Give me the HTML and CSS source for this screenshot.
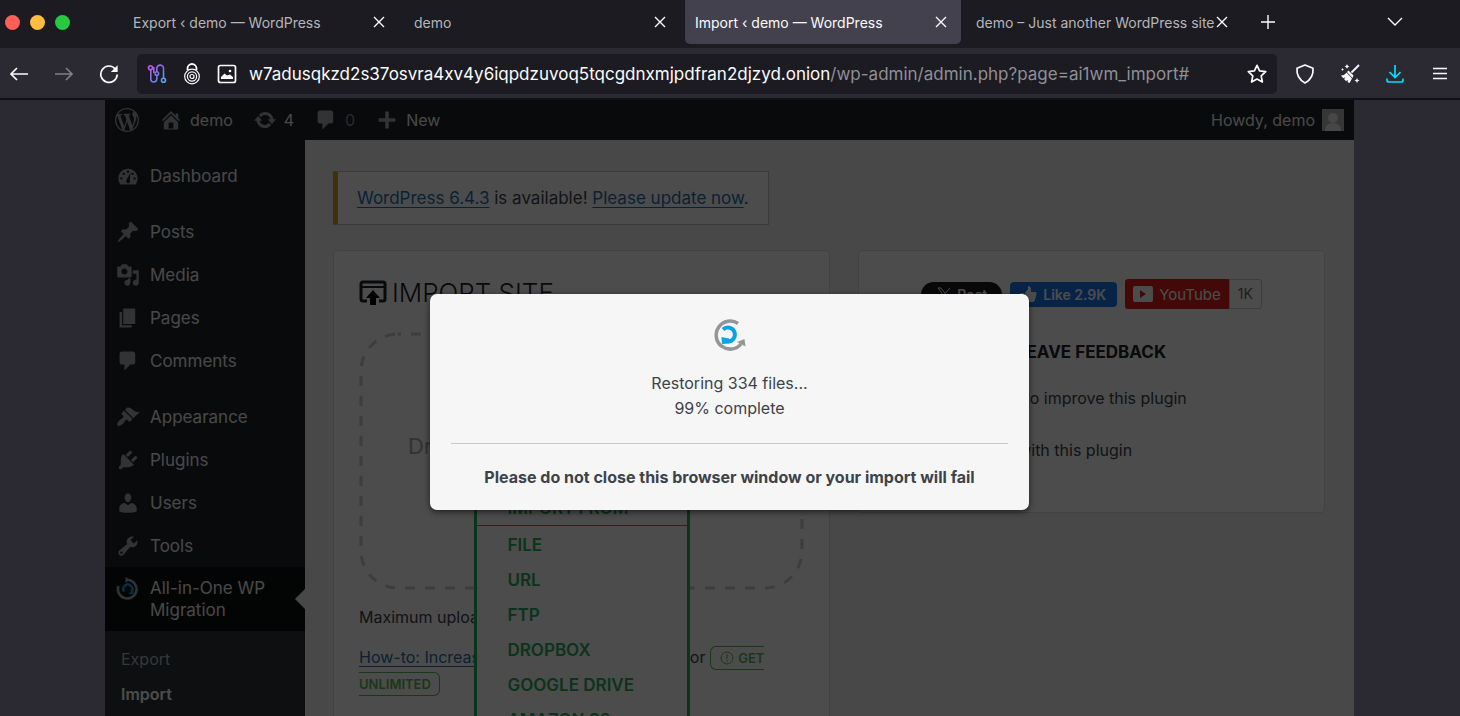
FILE: index.html
```html
<!DOCTYPE html>
<html lang="en">
<head>
    <meta charset="UTF-8">
    <meta name="viewport" content="width=device-width, initial-scale=1.0">
    <title>Import ‹ demo — WordPress</title>
    <link rel="stylesheet" href="styles.css">
</head>
<body>
    <header class="browser">
        <div class="tabs">
            <div class="lights">
                <span class="light red"></span>
                <span class="light yellow"></span>
                <span class="light green"></span>
            </div>
            <div class="tab">
                <span class="tab-title">Export ‹ demo — WordPress</span>
                <button class="close" aria-label="Close tab"><svg width="12" height="12" viewBox="0 0 12 12"><path d="M1 1l10 10M11 1L1 11"/></svg></button>
            </div>
            <div class="tab">
                <span class="tab-title">demo</span>
                <button class="close" aria-label="Close tab"><svg width="12" height="12" viewBox="0 0 12 12"><path d="M1 1l10 10M11 1L1 11"/></svg></button>
            </div>
            <div class="tab active">
                <span class="tab-title">Import ‹ demo — WordPress</span>
                <button class="close" aria-label="Close tab"><svg width="12" height="12" viewBox="0 0 12 12"><path d="M1 1l10 10M11 1L1 11"/></svg></button>
            </div>
            <div class="tab">
                <span class="tab-title">demo – Just another WordPress site</span>
                <button class="close" aria-label="Close tab"><svg width="12" height="12" viewBox="0 0 12 12"><path d="M1 1l10 10M11 1L1 11"/></svg></button>
            </div>
            <button class="new-tab" aria-label="New tab"><svg width="16" height="16" viewBox="0 0 16 16"><path d="M8 1v14M1 8h14"/></svg></button>
            <button class="all-tabs" aria-label="List all tabs"><svg width="16" height="16" viewBox="0 0 16 16"><path d="M1 4l7 7 7-7"/></svg></button>
        </div>

        <div class="toolbar">
            <div class="nav">
                <button aria-label="Back"><svg width="20" height="20" viewBox="0 0 20 20"><path d="M19 10H2M8 4l-6 6 6 6"/></svg></button>
                <button class="off" aria-label="Forward"><svg width="20" height="20" viewBox="0 0 20 20"><path d="M1 10h17M12 4l6 6-6 6"/></svg></button>
                <button aria-label="Reload"><svg width="20" height="20" viewBox="0 0 20 20"><path d="M16.500 5.200A8.200 8.200 0 1 0 18.200 10.500"/><path d="M18.600 1.200v6.800h-6.800z" fill="#fbfbfe" stroke="none"/></svg></button>
            </div>
            <div class="address">
                <svg width="20" height="20" viewBox="0 0 20 20">
                    <defs>
                        <linearGradient id="circuit" x1="0" y1="0" x2="20" y2="20" gradientUnits="userSpaceOnUse">
                            <stop offset="0" stop-color="#d355e0"/>
                            <stop offset=".5" stop-color="#7a70ea"/>
                            <stop offset="1" stop-color="#3cc4f5"/>
                        </linearGradient>
                    </defs>
                    <g stroke="url(#circuit)" fill="none" stroke-width="1.600">
                        <circle cx="3.500" cy="3.800" r="2"/>
                        <circle cx="16.500" cy="16.300" r="2"/>
                        <circle cx="9.800" cy="9.500" r="1.800"/>
                        <path d="M3.800 5.800v9.200a3 3 0 0 0 6 0v-3.700M9.800 7.700V4.500a3.300 3.300 0 0 1 6.700 0v9.800M5.500 3.800h1.300v5.200"/>
                    </g>
                </svg>
                <svg width="18" height="22" viewBox="0 0 18 22">
                    <path d="M4.500 7V5.500a4.500 4.500 0 0 1 9 0V7" stroke-width="1.800"/>
                    <circle cx="9" cy="13.500" r="7.300" stroke-width="1.200"/>
                    <circle cx="9" cy="13.500" r="4.600" stroke-width="1.200"/>
                    <circle cx="9" cy="13.500" r="2" stroke-width="1.200"/>
                </svg>
                <svg width="20" height="20" viewBox="0 0 20 20">
                    <rect x="1.500" y="1.500" width="17" height="17" rx="2"/>
                    <path d="M4 15v-2l3.500-3.500 2.500 2 3-1 3 2.500v2z" fill="#fbfbfe" stroke="none"/>
                    <circle cx="13" cy="7" r="1.300" fill="#fbfbfe" stroke="none"/>
                </svg>
                <div class="url"><strong>w7adusqkzd2s37osvra4xv4y6iqpdzuvoq5tqcgdnxmjpdfran2djzyd.onion</strong>/wp-admin/admin.php?page=ai1wm_import#</div>
                <button aria-label="Bookmark this page"><svg width="20" height="20" viewBox="0 0 20 20"><path d="M10 1.300l2.600 5.600 6.100.8-4.500 4.200 1.200 6.100-5.400-3-5.400 3 1.200-6.100L1.300 7.700l6.100-.8z" stroke-linejoin="round"/></svg></button>
            </div>
            <div class="tools">
                <button aria-label="Security level"><svg width="20" height="20" viewBox="0 0 20 20"><path d="M10 1l8 3.300c.5 6.200-2 11.500-8 14.700C4 15.800 1.500 10.500 2 4.300z" stroke-linejoin="round"/></svg></button>
                <button aria-label="New identity"><svg width="20" height="20" viewBox="0 0 20 20">
                    <path d="M19 1l-7.500 7.500" stroke-width="1.800"/>
                    <path d="M8.500 6.500l5 5-1 2.500-5.500-6zM6.500 8.500l5.500 6-2.500 4.500-2-1 .5-2-2 1-1.800-1.700 1-2-2 1L1 11.500c2.500-.2 4.200-1 5.500-3z" fill="#fbfbfe" stroke="none"/>
                    <path d="M7 0l.8 1.700L9.500 2.500l-1.700.8L7 5l-.8-1.700-1.700-.8 1.700-.8zM2.500 4l.5 1 1 .5-1 .5-.5 1L2 6l-1-.5L2 5zM17 14l.8 1.700 1.700.8-1.700.8L17 19l-.8-1.700-1.700-.8 1.700-.8z" fill="#fbfbfe" stroke="none"/>
                </svg></button>
                <button class="download" aria-label="Downloads"><svg width="20" height="20" viewBox="0 0 20 20"><path d="M10 1v12M4.500 8l5.500 5.500L15.500 8M2 14.500v1.500q0 2 2 2h12q2 0 2-2v-1.500"/></svg></button>
                <button aria-label="Open menu"><svg width="20" height="20" viewBox="0 0 20 20"><path d="M3 4.500h14M3 9.500h14M3 14.500h14"/></svg></button>
            </div>
        </div>
    </header>

    <div class="viewport">
        <nav class="adminbar">
            <a href="#" class="bar-item" aria-label="About WordPress"><svg width="24" height="24" viewBox="0 0 20 20"><path d="M20 10c0-5.510-4.490-10-10-10C4.480 0 0 4.490 0 10c0 5.520 4.480 10 10 10 5.510 0 10-4.480 10-10zM7.780 15.370L4.370 6.220c.55-.02 1.170-.08 1.170-.08.5-.06.44-1.130-.06-1.110 0 0-1.450.11-2.370.11-.18 0-.37 0-.58-.01C4.120 2.690 6.870 1.110 10 1.110c2.330 0 4.450.87 6.050 2.340-.68-.11-1.650.39-1.650 1.580 0 .74.45 1.360.9 2.100.35.61.55 1.360.55 2.460 0 1.490-1.400 5-1.400 5l-3.030-8.370c.54-.02.82-.17.82-.17.5-.05.44-1.250-.06-1.220 0 0-1.440.12-2.380.12-.87 0-2.330-.12-2.330-.12-.5-.03-.56 1.200-.06 1.220l.92.08 1.260 3.410zM17.410 10c.24-.64.74-1.870.43-4.250.7 1.290 1.050 2.710 1.050 4.250 0 3.290-1.730 6.240-4.400 7.780.97-2.590 1.940-5.200 2.920-7.780zM6.100 18.090C3.120 16.650 1.110 13.530 1.110 10c0-1.300.23-2.480.72-3.590C3.250 10.300 4.670 14.200 6.100 18.090zm4.030-6.630l2.580 6.980c-.86.29-1.760.45-2.710.45-.79 0-1.570-.11-2.290-.33.81-2.380 1.620-4.740 2.420-7.100z"/></svg></a>
            <a href="#" class="bar-item"><svg width="24" height="24" viewBox="0 0 20 20"><path d="M16 8.500l1.530 1.530-1.060 1.060L10 4.600l-6.470 6.490-1.060-1.060L10 2.500l4 4v-2h2v4zm-6-2.460l6 5.990V18H4v-5.970zM12 17v-5H8v5h4z"/></svg>demo</a>
            <a href="#" class="bar-item"><svg width="24" height="24" viewBox="0 0 20 20"><path d="M10.200 3.280c3.530 0 6.430 2.610 6.920 6h2.080l-3.500 4-3.500-4h2.320c-.45-1.970-2.210-3.450-4.320-3.450-1.450 0-2.730.71-3.540 1.780L4.950 5.660C6.230 4.200 8.110 3.280 10.200 3.280zm-.4 13.440c-3.520 0-6.430-2.610-6.920-6H.8l3.500-4 3.500 4H5.480c.45 1.970 2.210 3.450 4.320 3.450 1.450 0 2.730-.71 3.540-1.780l1.710 1.950c-1.280 1.460-3.150 2.380-5.250 2.380z"/></svg>4</a>
            <a href="#" class="bar-item none"><svg width="24" height="24" viewBox="0 0 20 20"><path d="M5 2h9c1.100 0 2 .9 2 2v7c0 1.100-.9 2-2 2h-2l-5 5v-5H5c-1.100 0-2-.9-2-2V4c0-1.100.9-2 2-2z"/></svg>0</a>
            <a href="#" class="bar-item"><svg width="24" height="24" viewBox="0 0 20 20"><path d="M17 8.500v3h-5.500V17h-3v-5.500H3v-3h5.500V3h3v5.500z"/></svg>New</a>
            <a href="#" class="bar-item account">Howdy, demo
                <svg class="avatar" width="22" height="22" viewBox="0 0 22 22"><rect width="22" height="22" fill="#b4b4b4"/><circle cx="11" cy="9" r="5" fill="#eee"/><path d="M3 22c0-5 3-8 8-8s8 3 8 8z" fill="#eee"/></svg></a>
        </nav>

        <div class="admin">
            <nav class="menu">
                <a href="#"><svg width="24" height="24" viewBox="0 0 20 20"><path fill-rule="evenodd" d="M3.760 17h12.480c1.100-1.370 1.760-3.110 1.760-5 0-4.420-3.580-8-8-8s-8 3.580-8 8c0 1.890.66 3.630 1.760 5zM9 6.500a1 1 0 0 1 2 0a1 1 0 0 1-2 0zM5.400 8.200a1 1 0 0 1 2 0a1 1 0 0 1-2 0zM3.500 12a1 1 0 0 1 2 0a1 1 0 0 1-2 0zM14.500 12a1 1 0 0 1 2 0a1 1 0 0 1-2 0zM11.900 7.300l-.3 6.400c.3 1.800-.7 2.500-1.700 2.300-1.300-.2-1.900-1.500-1.200-2.700zM12.800 8.200a1 1 0 0 1 2 0a1 1 0 0 1-2 0z"/></svg>Dashboard</a>
                <a href="#" class="spaced"><svg width="24" height="24" viewBox="0 0 20 20"><path d="M10.440 3.020l1.820-1.820 6.360 6.350-1.830 1.820c-1.050-.68-2.480-.57-3.410.36l-.75.75c-.92.93-1.040 2.350-.35 3.410l-1.830 1.820-2.410-2.410-2.800 2.790c-.42.42-3.380 2.710-3.800 2.290s1.860-3.390 2.280-3.810l2.790-2.790L4.100 9.360l1.830-1.820c1.050.69 2.480.57 3.400-.36l.75-.75c.93-.92 1.050-2.350.36-3.410z"/></svg>Posts</a>
                <a href="#"><svg width="24" height="24" viewBox="0 0 20 20"><path d="M13 11V4c0-.55-.45-1-1-1h-1.670L9 1H5L3.670 3H2c-.55 0-1 .45-1 1v7c0 .55.45 1 1 1h10c.55 0 1-.45 1-1zM7 4.500c1.380 0 2.500 1.120 2.500 2.500S8.380 9.500 7 9.500 4.500 8.380 4.500 7 5.620 4.500 7 4.500zM14 6h5v10.500c0 1.380-1.120 2.500-2.500 2.500S14 17.880 14 16.500s1.120-2.500 2.500-2.500c.17 0 .34.02.5.05V9h-3V6zm-4 8.050V13h2v3.500c0 1.380-1.120 2.500-2.500 2.500S7 17.880 7 16.500 8.120 14 9.500 14c.17 0 .34.02.5.05z"/></svg>Media</a>
                <a href="#"><svg width="24" height="24" viewBox="0 0 20 20"><path d="M6 15V2h10v13H6zm-1 1h8v2H3V5h2v11z"/></svg>Pages</a>
                <a href="#"><svg width="24" height="24" viewBox="0 0 20 20"><path d="M5 2h9c1.100 0 2 .9 2 2v7c0 1.100-.9 2-2 2h-2l-5 5v-5H5c-1.100 0-2-.9-2-2V4c0-1.100.9-2 2-2z"/></svg>Comments</a>
                <a href="#" class="spaced"><svg width="24" height="24" viewBox="0 0 20 20"><path d="M14.480 11.060L7.410 3.990l1.500-1.500c.5-.56 2.300-.47 3.510.32 1.210.8 1.430 1.280 2.910 2.100 1.180.64 2.450 1.260 4.450.85zm-.71.71L6.700 4.700 4.930 6.470c-.39.39-.39 1.020 0 1.410l1.060 1.060c.39.39.39 1.030 0 1.420-.6.6-1.430 1.110-2.210 1.690-.35.26-.7.53-1.010.84C1.430 14.230.4 16.080 1.400 17.070c.99 1 2.840-.03 4.180-1.360.31-.31.58-.66.85-1.020.57-.78 1.080-1.610 1.690-2.210.39-.39 1.020-.39 1.410 0l1.060 1.060c.39.39 1.020.39 1.410 0z"/></svg>Appearance</a>
                <a href="#"><svg width="24" height="24" viewBox="0 0 20 20"><path d="M13.110 4.360L9.870 7.600 8 5.730l3.240-3.240c.35-.34 1.050-.2 1.560.32.52.51.66 1.210.31 1.550zm-8 1.770l.91-1.120 9.010 9.010-1.190.84c-.71.71-2.630 1.160-3.820 1.160H6.140L4.900 17.260c-.59.59-1.540.59-2.120 0-.59-.58-.59-1.530 0-2.120l1.240-1.240v-3.880c0-1.130.4-3.190 1.090-3.890zm7.260 3.970l3.240-3.240c.34-.35 1.040-.21 1.550.31.52.51.66 1.210.31 1.550l-3.240 3.250z"/></svg>Plugins</a>
                <a href="#"><svg width="24" height="24" viewBox="0 0 20 20"><path d="M10 9.250c-2.270 0-2.730-3.440-2.730-3.440C7 4.020 7.820 2 9.970 2c2.160 0 2.980 2.020 2.710 3.810 0 0-.41 3.440-2.680 3.440zm0 2.570L12.720 10c2.390 0 4.520 2.330 4.520 4.530v2.490s-3.650 1.130-7.240 1.130c-3.650 0-7.240-1.130-7.240-1.130v-2.490c0-2.250 1.940-4.480 4.470-4.480z"/></svg>Users</a>
                <a href="#"><svg width="24" height="24" viewBox="0 0 20 20"><path d="M16.680 9.770c-1.340 1.340-3.300 1.670-4.950.99l-5.410 6.520c-.99.99-2.590.99-3.580 0s-.99-2.590 0-3.570l6.520-5.420c-.68-1.650-.35-3.610.99-4.950 1.280-1.280 3.120-1.620 4.720-1.060l-2.890 2.890 2.820 2.820 2.860-2.870c.53 1.580.18 3.390-1.080 4.650zM3.810 16.210c.4.39 1.040.39 1.430 0 .4-.4.4-1.040 0-1.430-.39-.4-1.030-.4-1.430 0-.39.39-.39 1.030 0 1.430z"/></svg>Tools</a>
                <a href="#" class="current"><svg width="24" height="24" viewBox="0 0 24 24"><g fill="none" stroke-width="2.500"><path d="M2.500 9a9.300 9.300 0 1 0 10-6" stroke="#a7aaad"/><path d="M8 14.500a4.500 4.500 0 1 1 7.500 0" stroke="#00a0e6"/></g><path d="M9.500 0l4.500 2.500-4.500 3.500z"/><path d="M17.500 11.500v5.500h-5z" fill="#00a0e6"/></svg>All-in-One WP Migration</a>
                <div class="submenu">
                    <a href="#">Export</a>
                    <a href="#" class="selected">Import</a>
                </div>
            </nav>

            <main class="content">
                <div class="notice"><a href="#">WordPress 6.4.3</a> is available! <a href="#">Please update now</a>.</div>

                <div class="columns">
                    <section class="card import">
                        <h1>
                            <svg width="28" height="28" viewBox="0 0 28 28"><path d="M8 22H4q-2 0-2-2V5q0-2 2-2h20q2 0 2 2v15q0 2-2 2h-4" fill="none" stroke="#1d2327" stroke-width="3"/><path d="M2 8h24" stroke="#1d2327" stroke-width="2"/><path d="M14 11l7 8h-4v7h-6v-7H7z"/></svg>
                            IMPORT SITE
                        </h1>
                        <div class="dropzone">
                            <svg class="dashes"><rect width="100%" height="100%" rx="37"/></svg>
                            <p>Drag &amp; Drop a backup to import it</p>
                            <div class="dropdown">
                                <button class="from">IMPORT FROM</button>
                                <ul>
                                    <li><a href="#">FILE</a></li>
                                    <li><a href="#">URL</a></li>
                                    <li><a href="#">FTP</a></li>
                                    <li><a href="#">DROPBOX</a></li>
                                    <li><a href="#">GOOGLE DRIVE</a></li>
                                    <li><a href="#">AMAZON S3</a></li>
                                </ul>
                            </div>
                        </div>
                        <p class="limit">Maximum upload file size: 512 MB.</p>
                        <p class="howto"><a href="#">How-to: Increase maximum upload file size</a> or <a href="#" class="unlimited"><svg width="16" height="16" viewBox="0 0 16 16"><circle cx="8" cy="8" r="6"/><path d="M8 4v5M8 10v2"/></svg> GET UNLIMITED</a></p>
                    </section>

                    <aside class="card feedback">
                        <div class="social">
                            <button class="post"><svg width="14" height="14" viewBox="0 0 14 14"><path d="M1 1h3l9 12h-3zM13 1L8 6.500M1 13l5-5.500"/></svg>Post</button>
                            <button class="like"><svg width="18" height="18" viewBox="0 0 18 18"><path d="M1 8h4v9H1zM6 8l3-4V1q3 0 3 3v3h4q2 0 1.500 2l-1.500 6q-.5 2-2 2H6z"/></svg>Like 2.9K</button>
                            <div class="yt">
                                <button><svg width="20" height="16" viewBox="0 0 20 16"><rect width="20" height="16" rx="2" fill="#fff"/><path d="M7 4l6 4-6 4z" fill="#e02020"/></svg>YouTube</button>
                                <span>1K</span>
                            </div>
                        </div>
                        <h2>LEAVE FEEDBACK</h2>
                        <label><input type="radio" name="feedback"> I have ideas to improve this plugin</label>
                        <label><input type="radio" name="feedback"> I need help with this plugin</label>
                    </aside>
                </div>
            </main>
        </div>

        <div class="overlay">
            <div class="modal" role="dialog" aria-label="Import progress">
                <svg width="36" height="36" viewBox="0 0 36 36">
                    <path d="M26 6.500A14 14 0 1 0 29 27" fill="none" stroke="#939598" stroke-width="3.500"/>
                    <path d="M25 25l7.500-3 1 7.500z" fill="#939598"/>
                    <path d="M11 12.500a7 7 0 1 1 5 12" fill="none" stroke="#0aa2e6" stroke-width="4"/>
                    <path d="M9.500 20l7.500 1.500v5l-7 .5z" fill="#0aa2e6"/>
                </svg>
                <p>Restoring 334 files...<br>99% complete</p>
                <p class="warning">Please do not close this browser window or your import will fail</p>
            </div>
        </div>
    </div>
</body>
</html>
```
FILE: styles.css
```css
* {
    box-sizing: border-box;
}

body {
    display: flex;
    flex-direction: column;
    height: 100vh;
    margin: 0;
    overflow: hidden;
    background-color: #2b2a33;
    font-family: Inter, "Liberation Sans", sans-serif;
    font-size: 17px;
}

button {
    padding: 0;
    border: none;
    background: none;
    color: inherit;
    font-family: inherit;
    cursor: pointer;
}

svg {
    display: block;
    flex: none;
}

/* browser chrome */
.browser {
    border-bottom: 2px solid #111115;
}

.browser svg {
    fill: none;
    stroke: #fbfbfe;
    stroke-width: 1.700;
}

.tabs {
    display: flex;
    align-items: center;
    gap: 5px;
    height: 48px;
    padding: 0 57px 4px 5px;
    background-color: #1c1b22;
}

.lights {
    display: flex;
    gap: 10px;
    width: 113px;
}

.light {
    width: 15px;
    height: 15px;
    border-radius: 50%;
}

.red {
    background-color: #ff5f57;
}

.yellow {
    background-color: #febc40;
}

.green {
    background-color: #28c840;
}

.tab {
    display: flex;
    align-items: center;
    flex: 0 1 276px;
    min-width: 0;
    height: 44px;
    padding: 0 14px 0 10px;
    border-radius: 0 0 5px 5px;
    color: #b5b5bb;
    font-size: 14px;
}

.tab.active {
    background-color: #42414d;
    color: #fbfbfe;
}

.tab-title {
    flex: 1;
    min-width: 0;
    overflow: hidden;
    white-space: nowrap;
}

.tabs svg {
    stroke-width: 1.400;
}

.new-tab {
    margin-left: 13px;
}

.all-tabs {
    margin-left: auto;
}

.toolbar {
    display: flex;
    align-items: center;
    gap: 18px;
    height: 50px;
    padding: 1px 10px 0 9px;
}

.nav,
.tools {
    display: flex;
    gap: 25px;
}

.off {
    opacity: 0.4;
}

.address {
    display: flex;
    align-items: center;
    flex: 1;
    gap: 16px;
    min-width: 0;
    height: 40px;
    padding: 0 10px;
    border-radius: 5px;
    background-color: #1c1b22;
}

.url {
    flex: 1;
    min-width: 0;
    margin-left: -4px;
    overflow: hidden;
    color: #8f8f98;
    white-space: nowrap;
}

.url strong {
    color: #fbfbfe;
    font-weight: 400;
}

.download svg {
    stroke: #00ddff;
}

/* wordpress admin */
.viewport {
    position: relative;
    display: flex;
    flex: 1;
    flex-direction: column;
    min-height: 0;
    margin: 0 106px 0 105px;
    overflow: hidden;
    background-color: #f0f0f1;
}

.adminbar {
    display: flex;
    flex: none;
    height: 40px;
    background-color: #1d2327;
    font-size: 16px;
}

.bar-item {
    display: flex;
    align-items: center;
    gap: 7px;
    padding: 0 10px;
    color: #f0f0f1;
    text-decoration: none;
}

.bar-item svg,
.menu svg {
    fill: #a7aaad;
}

.bar-item.none {
    color: #8c8f94;
}

.account {
    margin-left: auto;
}

.admin {
    display: flex;
    flex: 1;
    min-height: 0;
}

.menu {
    flex: none;
    width: 200px;
    padding-top: 14px;
    background-color: #1d2327;
}

.menu a {
    display: flex;
    align-items: center;
    gap: 10px;
    min-height: 43px;
    padding: 0 11px;
    color: #f0f0f1;
    line-height: 22px;
    text-decoration: none;
}

.menu .spaced {
    margin-top: 13px;
}

.menu .current {
    position: relative;
    align-items: flex-start;
    padding: 10px 11px;
    background-color: #0c0e10;
}

.current::after {
    content: "";
    position: absolute;
    top: 22px;
    right: 0;
    border: 10px solid transparent;
    border-left-width: 0;
    border-right-color: #f0f0f1;
}

.submenu {
    height: 200px;
    padding: 10px 5px;
    background-color: #2c3338;
}

.menu .submenu a {
    min-height: 35px;
    color: #b4b8bb;
    font-size: 16px;
}

.menu .submenu .selected {
    color: #fff;
    font-weight: 600;
}

.content {
    flex: 1;
    min-width: 0;
    padding: 31px 29px 31px 28px;
    color: #3c434a;
    font-size: 16px;
}

.content a {
    color: #2271b1;
    text-underline-offset: 3px;
}

.notice {
    width: fit-content;
    padding: 1px 19px 0;
    border: 1px solid #c3c4c7;
    border-left: 5px solid #dba617;
    background-color: #fff;
    font-size: 17px;
    line-height: 51px;
}

.columns {
    display: flex;
    align-items: flex-start;
    gap: 28px;
    margin-top: 25px;
}

.card {
    padding: 26px 25px;
    border: 1px solid #dcdcde;
    border-radius: 4px;
    background-color: #fff;
}

.import {
    flex: 1;
    min-width: 0;
}

h1 {
    display: flex;
    align-items: center;
    gap: 5px;
    margin: 0 0 23px;
    color: #1d2327;
    font-size: 26px;
    font-weight: 300;
    line-height: 32px;
}

.dropzone {
    position: relative;
    display: flex;
    flex-direction: column;
    align-items: center;
    gap: 26px;
    height: 258px;
    padding-top: 99px;
}

.dashes {
    position: absolute;
    inset: 2px;
    width: calc(100% - 4px);
    height: calc(100% - 4px);
    overflow: visible;
    fill: none;
    stroke: #cccccc;
    stroke-width: 3;
    stroke-dasharray: 10 10;
    stroke-dashoffset: 7;
}

.dropzone p {
    margin: 0;
    color: #a9a9a9;
    font-size: 22px;
    line-height: 30px;
}

.dropdown {
    z-index: 1;
    width: 216px;
    border: 3px solid #27ae60;
    border-radius: 5px;
    background-color: #fff;
}

.from {
    width: 100%;
    height: 35px;
    padding-left: 31px;
    color: #27ae60;
    font-size: 17px;
    font-weight: 600;
    text-align: left;
}

.dropdown ul {
    margin: 0;
    padding: 2px 0 0;
    border-top: 1px solid #27ae60;
    list-style: none;
}

.dropdown li a {
    display: block;
    padding-left: 31px;
    color: #27ae60;
    font-size: 17px;
    font-weight: 600;
    line-height: 35px;
    text-decoration: none;
}

.limit,
.howto {
    margin: 15px 0 0;
    line-height: 25px;
}

.content .unlimited {
    padding: 3px 8px;
    border: 1px solid #5cb85c;
    border-radius: 6px;
    color: #5cb85c;
    font-size: 13px;
    font-weight: 600;
    text-decoration: none;
}

.unlimited svg {
    display: inline-block;
    vertical-align: -3px;
    fill: none;
    stroke: #5cb85c;
}

.feedback {
    flex: none;
    width: 467px;
    height: 263px;
}

.social {
    display: flex;
    align-items: center;
    justify-content: center;
    gap: 8px;
    margin-top: 2px;
}

.social button {
    display: flex;
    align-items: center;
    gap: 6px;
    height: 25px;
    color: #fff;
    font-size: 14px;
    font-weight: 600;
}

.social .post {
    padding: 0 15px 0 16px;
    border-radius: 13px;
    background-color: #1d1d1f;
}

.post svg {
    fill: none;
    stroke: #fff;
}

.social .like {
    padding: 0 11px 0 9px;
    border-radius: 4px;
    background-color: #1877f2;
}

.like svg {
    fill: #fff;
}

.yt {
    display: flex;
}

.social .yt button {
    height: 30px;
    padding: 0 8px;
    border-radius: 3px 0 0 3px;
    background-color: #e02020;
    font-size: 15px;
    font-weight: 400;
}

.yt span {
    padding: 0 8px;
    border: 1px solid #c8c8c8;
    border-radius: 0 3px 3px 0;
    color: #666;
    font-size: 14px;
    line-height: 28px;
}

h2 {
    margin: 32px 0 23px;
    color: #1d2327;
    font-size: 17px;
    font-weight: 700;
    line-height: 22px;
    text-align: center;
}

.feedback label {
    display: flex;
    align-items: center;
    gap: 8px;
    margin-bottom: 28px;
    padding-left: 18px;
    line-height: 24px;
}

.feedback input {
    width: 20px;
    height: 20px;
    margin: 0;
}

/* import progress */
.overlay {
    position: absolute;
    inset: 0;
    z-index: 2;
    display: flex;
    align-items: flex-start;
    justify-content: center;
    padding-top: 194px;
    background-color: rgba(0, 0, 0, 0.7);
}

.modal {
    display: flex;
    flex-direction: column;
    align-items: center;
    width: 599px;
    padding: 23px 21px 20px;
    border-radius: 7px;
    background-color: #f6f6f6;
    box-shadow: 0 2px 6px rgba(0, 0, 0, 0.6);
    color: #3c434a;
    font-size: 16px;
    line-height: 25px;
    text-align: center;
}

.modal p {
    margin: 18px 0 22px;
}

.modal .warning {
    width: 100%;
    margin: 0;
    padding-top: 21px;
    border-top: 1px solid #c8c8c8;
    font-weight: 700;
}
```
